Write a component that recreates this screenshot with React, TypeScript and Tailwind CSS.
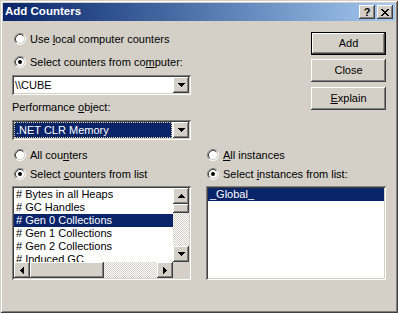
import React from 'react';

const raised =
  'shadow-[inset_-1px_-1px_#404040,inset_1px_1px_#fff,inset_-2px_-2px_#808080,inset_2px_2px_#d4d0c8]';
const sunken =
  'shadow-[inset_1px_1px_#808080,inset_-1px_-1px_#fff,inset_2px_2px_#404040,inset_-2px_-2px_#d4d0c8]';

const Radio = ({ checked }: { checked?: boolean }) => (
  <svg width="12" height="12" viewBox="0 0 12 12" className="shrink-0">
    <circle cx="6" cy="6" r="4.5" fill="#fff" />
    <path d="M2.11 9.89A5.5 5.5 0 0 1 9.89 2.11" stroke="#808080" fill="none" />
    <path d="M9.89 2.11A5.5 5.5 0 0 1 2.11 9.89" stroke="#fff" fill="none" />
    <path d="M2.82 9.18A4.5 4.5 0 0 1 9.18 2.82" stroke="#404040" fill="none" />
    <path d="M9.18 2.82A4.5 4.5 0 0 1 2.82 9.18" stroke="#d4d0c8" fill="none" />
    {checked && <circle cx="6" cy="6" r="2" fill="#000" />}
  </svg>
);

// pixel triangles like the classic scroll arrows
const Arrow = ({ dir }: { dir: 'up' | 'down' | 'left' | 'right' }) => {
  if (dir === 'down' || dir === 'up') {
    const rows = dir === 'down' ? [0, 1, 2, 3] : [3, 2, 1, 0];
    return (
      <svg width="7" height="4" viewBox="0 0 7 4" shapeRendering="crispEdges">
        {rows.map((r, i) => (
          <rect key={i} x={r} y={i} width={7 - r * 2} height={1} fill="#000" />
        ))}
      </svg>
    );
  }
  const cols = dir === 'right' ? [0, 1, 2, 3] : [3, 2, 1, 0];
  return (
    <svg width="4" height="7" viewBox="0 0 4 7" shapeRendering="crispEdges">
      {cols.map((c, i) => (
        <rect key={i} x={i} y={c} width={1} height={7 - c * 2} fill="#000" />
      ))}
    </svg>
  );
};

const ScrollBtn = ({ dir }: { dir: 'up' | 'down' | 'left' | 'right' }) => (
  <div className={`w-[16px] h-[16px] shrink-0 bg-[#d4d0c8] flex items-center justify-center ${raised}`}>
    <Arrow dir={dir} />
  </div>
);

const RadioRow = ({ checked, children, indent }: { checked?: boolean; children: React.ReactNode; indent: string }) => (
  <div className={`h-[12px] flex items-center gap-[4px] ${indent}`}>
    <Radio checked={checked} />
    <span className="leading-[12px]">{children}</span>
  </div>
);

const Button = ({ children, isDefault }: { children: React.ReactNode; isDefault?: boolean }) => (
  <div className={`w-[75px] h-[23px] ${isDefault ? 'border border-black' : ''}`}>
    <div className={`w-full h-full bg-[#d4d0c8] flex items-center justify-center ${raised}`}>{children}</div>
  </div>
);

const counters = [
  '# Bytes in all Heaps',
  '# GC Handles',
  '# Gen 0 Collections',
  '# Gen 1 Collections',
  '# Gen 2 Collections',
  '# Induced GC',
];

const App = () => {
  return (
    <div className="w-[398px] h-[313px] bg-[#d4d0c8] p-[3px] font-['Liberation_Sans',Arial,sans-serif] text-[11px] text-black shadow-[inset_1px_1px_#d4d0c8,inset_-1px_-1px_#404040,inset_2px_2px_#fff,inset_-2px_-2px_#808080]">
      {/* title bar */}
      <div className="h-[18px] flex items-center pl-[2px] pr-[2px] bg-gradient-to-r from-[#0a246a] to-[#a6caf0]">
        <span className="text-white font-bold text-[11.5px] leading-none">Add Counters</span>
        <div className="ml-auto flex gap-[2px]">
          <div className={`w-[16px] h-[14px] bg-[#d4d0c8] flex items-center justify-center font-bold text-[11px] leading-none ${raised}`}>
            ?
          </div>
          <div className={`w-[16px] h-[14px] bg-[#d4d0c8] flex items-center justify-center ${raised}`}>
            <svg width="8" height="7" viewBox="0 0 8 7" shapeRendering="crispEdges">
              <path d="M0 0h2v1H0zM6 0h2v1H6zM1 1h2v1H1zM5 1h2v1H5zM2 2h4v1H2zM3 3h2v1H3zM2 4h4v1H2zM1 5h2v1H1zM5 5h2v1H5zM0 6h2v1H0zM6 6h2v1H6z" fill="#000" />
            </svg>
          </div>
        </div>
      </div>

      {/* upper section */}
      <div className="flex pl-[9px]">
        <div className="w-[179px] flex flex-col">
          <div className="mt-[12px]">
            <RadioRow indent="ml-[2px]">
              Use <span className="underline">l</span>ocal computer counters
            </RadioRow>
          </div>
          <div className="mt-[11px]">
            <RadioRow checked indent="ml-[2px]">
              Select counters from co<span className="underline">m</span>puter:
            </RadioRow>
          </div>
          <div className={`mt-[7px] h-[20px] bg-white p-[2px] flex ${sunken}`}>
            <div className="flex-1 flex items-center pl-[1px]">\\CUBE</div>
            <ScrollBtn dir="down" />
          </div>
          <div className="mt-[6px] h-[13px] leading-[13px]">
            Performance <span className="underline">o</span>bject:
          </div>
          <div className={`mt-[6px] h-[20px] bg-white p-[2px] flex ${sunken}`}>
            <div className="flex-1 pr-[1px]">
              <div className="h-full bg-[#0a246a] text-white flex items-center pl-[1px] border border-dotted border-[#e8d8a0]">
                .NET CLR Memory
              </div>
            </div>
            <ScrollBtn dir="down" />
          </div>
        </div>

        <div className="ml-[120px] flex flex-col pt-[11px]">
          <Button isDefault>Add</Button>
          <div className="mt-[4px]">
            <Button>Close</Button>
          </div>
          <div className="mt-[5px]">
            <Button>
              <span className="underline">E</span>xplain
            </Button>
          </div>
        </div>
      </div>

      {/* lower section */}
      <div className="flex pl-[9px] mt-[9px]">
        <div className="w-[179px] flex flex-col">
          <RadioRow indent="ml-[2px]">
            All cou<span className="underline">n</span>ters
          </RadioRow>
          <div className="mt-[7px]">
            <RadioRow checked indent="ml-[2px]">
              Select <span className="underline">c</span>ounters from list
            </RadioRow>
          </div>
          <div className={`mt-[6px] h-[94px] bg-white p-[2px] flex flex-col ${sunken}`}>
            <div className="flex h-[74px]">
              <div className="flex-1 overflow-hidden">
                {counters.map((c, i) => (
                  <div
                    key={c}
                    className={`h-[13px] leading-[13px] pl-[2px] whitespace-nowrap ${
                      i === 2 ? 'bg-[#0a246a] text-white' : ''
                    }`}
                  >
                    {c}
                  </div>
                ))}
              </div>
              <div className="w-[16px] flex flex-col">
                <ScrollBtn dir="up" />
                <div className={`h-[9px] bg-[#d4d0c8] ${raised}`} />
                <div className="flex-1 bg-[repeating-conic-gradient(#fff_0_25%,#d4d0c8_0_50%)] bg-[length:2px_2px]" />
                <ScrollBtn dir="down" />
              </div>
            </div>
            <div className="flex h-[16px]">
              <ScrollBtn dir="left" />
              <div className={`w-[74px] bg-[#d4d0c8] ${raised}`} />
              <div className="flex-1 bg-[repeating-conic-gradient(#fff_0_25%,#d4d0c8_0_50%)] bg-[length:2px_2px]" />
              <ScrollBtn dir="right" />
              <div className="w-[16px] bg-[#d4d0c8]" />
            </div>
          </div>
        </div>

        <div className="ml-[15px] w-[180px] flex flex-col">
          <RadioRow indent="ml-[1px]">
            <span className="underline">A</span>ll instances
          </RadioRow>
          <div className="mt-[7px]">
            <RadioRow checked indent="ml-[1px]">
              Select <span className="underline">i</span>nstances from list:
            </RadioRow>
          </div>
          <div className={`mt-[6px] h-[94px] bg-white p-[2px] ${sunken}`}>
            <div className="h-[13px] leading-[13px] pl-[2px] bg-[#0a246a] text-white">_Global_</div>
          </div>
        </div>
      </div>
    </div>
  );
};

export default App;
